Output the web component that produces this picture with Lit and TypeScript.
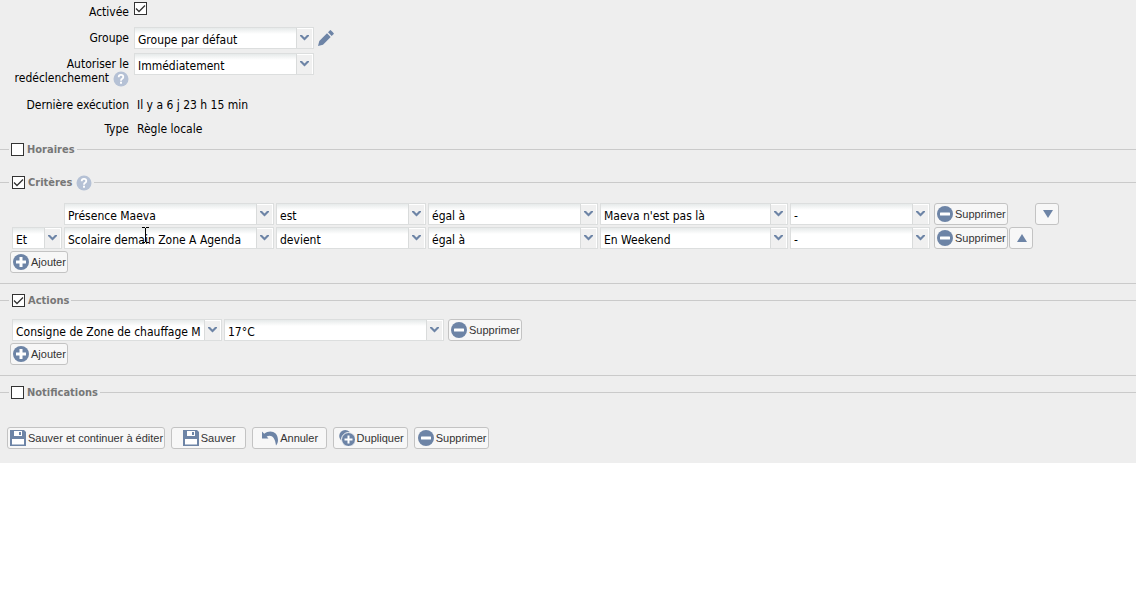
import { LitElement, html, css, svg, nothing } from "lit";
import { customElement, property } from "lit/decorators.js";
import { classMap } from "lit/directives/class-map.js";

const icons: Record<string, unknown> = {
  minus: svg`<circle cx="8" cy="8" r="8" fill="#6d84a6"/><rect x="3" y="6.5" width="10" height="3" rx="0.5" fill="#fff"/>`,
  plus: svg`<circle cx="8" cy="8" r="8" fill="#6d84a6"/><path d="M6.500 3h3v3.500H13v3H9.500V13h-3V9.500H3v-3h3.500z" fill="#fff"/>`,
  save: svg`<path d="M0 0h14l2 2v14H0z" fill="#6d84a6"/><path d="M4 1h8v5H4z" fill="#fff"/><path d="M9 2h2v3H9z" fill="#6d84a6"/><path d="M2 9h12v5.500H2z" fill="#fff"/>`,
  undo: svg`<path d="M0 1.500v7h6.500L4.600 6.600C8.500 4.200 13 6 14 15.500 15.400 14 16 12 16 10 15.800 1.500 8-.5 2.200 3.700z" fill="#6d84a6"/>`,
  copy: svg`<circle cx="6.200" cy="6" r="6" fill="#6d84a6"/><circle cx="9.500" cy="9.500" r="7" fill="#6d84a6" stroke="#f6f6f6"/><path d="M8.500 5.500h2v3h3v2h-3v3h-2v-3h-3v-2h3z" fill="#fff"/>`,
  pencil: svg`<path d="M0 16l1.300-5L9 3.300 12.700 7 5 14.700zM10 2.300L12.300 0Q13 0 16 3.700L13.700 6z" fill="#6d84a6"/>`,
  help: svg`<circle cx="8" cy="8" r="7.500" fill="#b5c1d5"/><path d="M5.700 6.200Q5.700 3.900 8 3.900T10.300 6Q10.300 7.200 9 7.900 8 8.400 8 9.700" fill="none" stroke="#fff" stroke-width="1.800"/><rect x="7" y="10.700" width="2" height="2" fill="#fff"/>`,
  up: svg`<path d="M8 4l5 8H3z" fill="#6d84a6"/>`,
  down: svg`<path d="M8 12l5-8H3z" fill="#6d84a6"/>`,
};

const icon = (name: string) =>
  html`<svg class="icon" width="16" height="16" viewBox="0 0 16 16" aria-hidden="true">${icons[name]}</svg>`;

const shared = css`
  .icon {
    display: block;
    flex: none;
  }
`;

@customElement("combo-box")
class ComboBox extends LitElement {
  @property() value = "";
  @property() label = "";

  static styles = css`
    :host {
      display: block;
    }
    .combo {
      display: grid;
      grid-template-columns: minmax(0, 1fr) 17px;
      height: 22px;
      box-sizing: border-box;
      border: 1px solid #dcdede;
      background: #fff linear-gradient(#e6eaea, #fff 6px);
    }
    select {
      grid-area: 1 / 1 / 2 / 3;
      appearance: none;
      box-sizing: border-box;
      height: 20px;
      min-width: 0;
      margin: 0;
      padding: 4px 20px 0 3px;
      border: 0;
      border-radius: 0;
      background: none;
      color: #000;
      font: 12px/16px "DejaVu Sans Condensed", "Noto Sans", sans-serif;
    }
    .trigger {
      grid-area: 1 / 2;
      display: flex;
      justify-content: center;
      padding: 7px 2px 0 0;
      border-left: 1px solid #d9dbdb;
      box-shadow: inset -1px 1px #fff;
      background: #f0f0f0;
      pointer-events: none;
    }
  `;

  render() {
    return html`<div class="combo">
      <span class="trigger"><svg width="9" height="6" viewBox="0 0 9 6" aria-hidden="true"><path d="M0 0h2l2.500 2.500L7 0h2v1L4.500 5.500 0 1z" fill="#6d84a6"/></svg></span>
      <select aria-label=${this.label}><option>${this.value}</option></select>
    </div>`;
  }
}

@customElement("tool-button")
class ToolButton extends LitElement {
  @property() icon = "";
  @property() text = "";
  @property() label = "";

  static styles = [
    shared,
    css`
      :host {
        display: inline-flex;
      }
      button {
        display: flex;
        flex: 1;
        align-items: center;
        justify-content: center;
        gap: 2px;
        height: 22px;
        box-sizing: border-box;
        margin: 0;
        padding: 0 1px 0 2px;
        border: 1px solid #c3c3c3;
        border-radius: 3px;
        background: #f7f7f7;
        color: #333;
        font: 11px/16px "Liberation Sans", Arial, sans-serif;
        white-space: nowrap;
      }
    `,
  ];

  render() {
    return html`<button type="button" aria-label=${this.label || this.text}>${icon(this.icon)}${this.text ? html`<span>${this.text}</span>` : nothing}</button>`;
  }
}

@customElement("check-box")
class CheckBox extends LitElement {
  @property({ type: Boolean }) checked = false;
  @property() text = "";
  @property() label = "";

  static styles = css`
    :host {
      display: inline-flex;
    }
    label {
      display: flex;
      align-items: center;
      gap: 3px;
    }
    .box {
      display: grid;
      width: 13px;
      height: 13px;
    }
    input {
      grid-area: 1 / 1;
      appearance: none;
      box-sizing: border-box;
      width: 13px;
      height: 13px;
      margin: 0;
      border: 1px solid #333;
      background: #fff;
    }
    svg {
      grid-area: 1 / 1;
      pointer-events: none;
    }
  `;

  render() {
    return html`<label>
      <span class="box">
        <input type="checkbox" aria-label=${this.label || this.text} .checked=${this.checked} />
        ${this.checked
          ? html`<svg width="13" height="13" viewBox="0 0 13 13" aria-hidden="true"><path d="M2 6.500L5 9.500l6-6" fill="none" stroke="#333" stroke-width="1.300"/></svg>`
          : nothing}
      </span>
      ${this.text ? html`<span>${this.text}</span>` : nothing}
    </label>`;
  }
}

const criteria = [
  { link: "", cells: ["Présence Maeva", "est", "égal à", "Maeva n'est pas là", "-"], move: "down" },
  { link: "Et", cells: ["Scolaire demain Zone A Agenda", "devient", "égal à", "En Weekend", "-"], move: "up" },
];
const cellNames = ["Élément", "Événement", "Comparaison", "Valeur", "Option"];

@customElement("app-root")
class AppRoot extends LitElement {
  static styles = [
    shared,
    css`
      :host {
        display: block;
        background: #eee;
        color: #000;
        font: 12px/14px "DejaVu Sans Condensed", "Noto Sans", sans-serif;
        padding-bottom: 14px;
      }
      .row {
        display: grid;
        grid-template-columns: 129px minmax(0, 1fr);
        column-gap: 5px;
        min-height: 24px;
      }
      .row.first {
        min-height: 27px;
      }
      .row.field {
        min-height: 26px;
      }
      .row.tall {
        min-height: 40px;
      }
      .name {
        padding-top: 4px;
        text-align: right;
      }
      .first .name,
      .info .name {
        padding-top: 5px;
      }
      .with-help {
        display: flex;
        justify-content: flex-end;
        gap: 4px;
        height: 14px;
      }
      .value {
        padding: 5px 0 0 3px;
      }
      .tick {
        padding-top: 2px;
        line-height: 0;
      }
      .control {
        display: flex;
        align-items: flex-start;
        gap: 4px;
      }
      .control combo-box {
        width: 180px;
      }
      .edit {
        margin: 0;
        padding: 3px 0 0;
        border: 0;
        background: none;
      }
      fieldset {
        min-width: 0;
        margin: 0 0 8px;
        padding: 0 0 10px 10px;
        border: 0 solid #cacaca;
        border-width: 1px 0;
      }
      fieldset.closed {
        border-bottom: 0;
        padding-bottom: 0;
        margin-bottom: 16px;
      }
      fieldset.last {
        margin-bottom: 26px;
      }
      legend {
        display: flex;
        align-items: center;
        gap: 4px;
        height: 17px;
        margin-left: -1px;
        padding: 0 2px;
        color: #777;
        font-size: 11px;
        font-weight: bold;
      }
      fieldset.open legend {
        padding-left: 3px;
      }
      .body {
        display: flex;
        flex-direction: column;
        align-items: flex-start;
        gap: 2px;
        padding-top: 10px;
      }
      .body.roomy {
        padding-top: 12px;
      }
      .criterion {
        position: relative;
        display: grid;
        grid-template-columns: 50px 210px 150px 170px 188px 140px 75px 24px 24px;
        gap: 2px;
        padding-left: 2px;
      }
      .remove {
        padding-left: 2px;
      }
      .criterion .remove {
        justify-self: start;
      }
      .down {
        grid-column: 9;
      }
      .action {
        display: grid;
        grid-template-columns: 210px 220px auto;
        gap: 2px;
        padding-left: 2px;
      }
      .first-cell {
        grid-column: 2;
      }
      .caret {
        position: absolute;
        left: 132px;
        top: 0;
        pointer-events: none;
      }
      .toolbar {
        display: flex;
        flex-wrap: wrap;
        gap: 6px;
        padding-left: 7px;
      }
      .toolbar tool-button {
        min-width: 75px;
      }
    `,
  ];

  private criterion(c: (typeof criteria)[number]) {
    return html`
      ${c.link ? html`<combo-box label="Opérateur" .value=${c.link}></combo-box>` : nothing}
      ${c.cells.map(
        (v, i) => html`<combo-box
          class=${classMap({ "first-cell": i === 0 })}
          .label=${cellNames[i]}
          .value=${v}
        ></combo-box>`,
      )}
      <tool-button class="remove" icon="minus" text="Supprimer"></tool-button>
      <tool-button class=${c.move} .icon=${c.move} .label=${c.move === "up" ? "Monter" : "Descendre"}></tool-button>
    `;
  }

  render() {
    return html`
      <div class="row first">
        <div class="name">Activée</div>
        <div class="tick"><check-box checked label="Activée"></check-box></div>
      </div>
      <div class="row field">
        <div class="name">Groupe</div>
        <div class="control">
          <combo-box label="Groupe" value="Groupe par défaut"></combo-box>
          <button class="edit" type="button" aria-label="Modifier">${icon("pencil")}</button>
        </div>
      </div>
      <div class="row tall">
        <div class="name">
          Autoriser le
          <div class="with-help"><span>redéclenchement</span>${icon("help")}</div>
        </div>
        <div class="control"><combo-box label="Autoriser le redéclenchement" value="Immédiatement"></combo-box></div>
      </div>
      <div class="row info">
        <div class="name">Dernière exécution</div>
        <div class="value">Il y a 6 j 23 h 15 min</div>
      </div>
      <div class="row info">
        <div class="name">Type</div>
        <div class="value">Règle locale</div>
      </div>

      <fieldset class="closed">
        <legend><check-box text="Horaires"></check-box></legend>
      </fieldset>

      <fieldset class="open">
        <legend><check-box checked text="Critères"></check-box>${icon("help")}</legend>
        <div class="body roomy">
          <div class="criterion">${this.criterion(criteria[0])}</div>
          <div class="criterion">
            ${this.criterion(criteria[1])}
            <svg class="caret" width="7" height="16" viewBox="0 0 7 16" aria-hidden="true">
              <path d="M0 .5h3M4 .5h3M0 15.500h3M4 15.500h3M3.500 1v14" stroke="#000" fill="none" />
            </svg>
          </div>
          <tool-button icon="plus" text="Ajouter"></tool-button>
        </div>
      </fieldset>

      <fieldset class="open">
        <legend><check-box checked text="Actions"></check-box></legend>
        <div class="body">
          <div class="action">
            <combo-box label="Action" value="Consigne de Zone de chauffage M"></combo-box>
            <combo-box label="Valeur" value="17°C"></combo-box>
            <tool-button class="remove" icon="minus" text="Supprimer"></tool-button>
          </div>
          <tool-button icon="plus" text="Ajouter"></tool-button>
        </div>
      </fieldset>

      <fieldset class="closed last">
        <legend><check-box text="Notifications"></check-box></legend>
      </fieldset>

      <div class="toolbar">
        <tool-button icon="save" text="Sauver et continuer à éditer"></tool-button>
        <tool-button icon="save" text="Sauver"></tool-button>
        <tool-button icon="undo" text="Annuler"></tool-button>
        <tool-button icon="copy" text="Dupliquer"></tool-button>
        <tool-button icon="minus" text="Supprimer"></tool-button>
      </div>
    `;
  }
}
